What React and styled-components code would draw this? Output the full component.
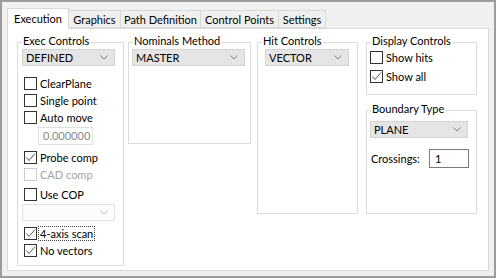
import styled, { createGlobalStyle } from 'styled-components'

const GlobalStyle = createGlobalStyle`
  body {
    margin: 0;
    font-family: Lato, "Noto Sans", sans-serif;
    font-size: 11px;
    color: #000;
  }
`

function Chevron({ $light }) {
  return (
    <svg width="8" height="5" viewBox="0 0 8 5">
      <path d="M0.5 0.5 L4 4 L7.5 0.5" fill="none" stroke={$light ? '#c4c4c4' : '#808080'} strokeWidth="1" />
    </svg>
  )
}

function Check({ label, checked, disabled, focused }) {
  return (
    <CheckRow $disabled={disabled}>
      <Box $disabled={disabled}>
        {checked && (
          <svg width="11" height="11" viewBox="0 0 11 11">
            <path d="M1.5 5.5 L4 8.5 L10 1.5" fill="none" stroke="#444" strokeWidth="0.9" />
          </svg>
        )}
      </Box>
      <CheckLabel $focused={focused}>{label}</CheckLabel>
    </CheckRow>
  )
}

function Combo({ value, w, disabled, mt, ml }) {
  return (
    <ComboBox $w={w} $disabled={disabled} $mt={mt} $ml={ml}>
      <span>{value}</span>
      <Chevron $light={disabled} />
    </ComboBox>
  )
}

const tabs = [
  { name: 'Execution', w: 62, active: true },
  { name: 'Graphics', w: 53 },
  { name: 'Path Definition', w: 81 },
  { name: 'Control Points', w: 79 },
  { name: 'Settings', w: 48 },
]

function App() {
  return (
    <>
      <GlobalStyle />
      <Window>
        <TabStrip>
          {tabs.map((t) => (
            <Tab key={t.name} $w={t.w} $active={t.active}>
              {t.name}
            </Tab>
          ))}
        </TabStrip>
        <Panel>
          <GroupBox $w={107} $h={224} $pl={4}>
            <Title>Exec Controls</Title>
            <Combo value="DEFINED" w={93} mt={6} />
            <Stack $ml={2} $mt={9}>
              <Check label="ClearPlane" />
              <Check label="Single point" />
              <Check label="Auto move" />
            </Stack>
            <NumInput $ml={16}>0.000000</NumInput>
            <Stack $ml={2} $mt={4}>
              <Check label="Probe comp" checked />
              <Check label="CAD comp" disabled />
            </Stack>
            <Stack $ml={2} $mt={3}>
              <Check label="Use COP" />
            </Stack>
            <Combo value="" w={93} disabled mt={1} />
            <Stack $ml={2} $mt={4}>
              <Check label="4-axis scan" checked focused />
              <Check label="No vectors" checked />
            </Stack>
          </GroupBox>

          <GroupBox $w={123} $h={102} $pl={3} $ml={4}>
            <Title>Nominals Method</Title>
            <Combo value="MASTER" w={113} mt={6} />
          </GroupBox>

          <GroupBox $w={101} $h={172} $pl={7} $ml={6}>
            <Title>Hit Controls</Title>
            <Combo value="VECTOR" w={84} mt={6} />
          </GroupBox>

          <Column>
            <GroupBox $w={111} $h={53} $pl={3}>
              <Title>Display Controls</Title>
              <Stack $mt={6} $gap={2}>
                <Check label="Show hits" />
                <Check label="Show all" checked />
              </Stack>
            </GroupBox>
            <GroupBox $w={111} $h={104} $pl={3}>
              <Title>Boundary Type</Title>
              <Combo value="PLANE" w={98} mt={10} />
              <FieldRow>
                <span>Crossings:</span>
                <TextInput>1</TextInput>
              </FieldRow>
            </GroupBox>
          </Column>
        </Panel>
      </Window>
    </>
  )
}

const Window = styled.div`
  width: 496px;
  height: 278px;
  box-sizing: border-box;
  border: 2px solid #9c9c9c;
  background: #f0f0f0;
  padding: 6px 5px 5px 5px;
  display: flex;
  flex-direction: column;
`

const TabStrip = styled.div`
  display: flex;
  align-items: flex-end;
  height: 21px;
  margin-bottom: -1px;
  position: relative;
  z-index: 1;
`

const Tab = styled.div`
  box-sizing: border-box;
  width: ${({ $w }) => $w}px;
  height: ${({ $active }) => ($active ? '21px' : '18px')};
  margin-bottom: ${({ $active }) => ($active ? '0' : '1px')};
  margin-left: -1px;
  &:first-child { margin-left: 0; }
  display: flex;
  align-items: center;
  justify-content: center;
  padding-bottom: ${({ $active }) => ($active ? '2px' : '0')};
  border: 1px solid #d9d9d9;
  border-bottom: ${({ $active }) => ($active ? 'none' : '1px solid #d9d9d9')};
  background: ${({ $active }) => ($active ? '#ffffff' : '#f0f0f0')};
  white-space: nowrap;
`

const Panel = styled.div`
  flex: 1;
  background: #ffffff;
  border: 1px solid #d9d9d9;
  padding: 13px 0 0 9px;
  display: flex;
  align-items: flex-start;
`

const Column = styled.div`
  display: flex;
  flex-direction: column;
  gap: 15px;
  margin-left: 8px;
`

const GroupBox = styled.div`
  position: relative;
  box-sizing: border-box;
  width: ${({ $w }) => $w}px;
  height: ${({ $h }) => $h}px;
  margin-left: ${({ $ml }) => $ml || 0}px;
  border: 1px solid #dcdcdc;
  padding-left: ${({ $pl }) => $pl}px;
  display: flex;
  flex-direction: column;
  align-items: flex-start;
`

const Title = styled.div`
  position: absolute;
  top: -9px;
  left: 4px;
  padding: 0 1px;
  background: #ffffff;
  line-height: 14px;
  white-space: nowrap;
`

const ComboBox = styled.div`
  box-sizing: border-box;
  width: ${({ $w }) => $w}px;
  height: 17px;
  margin-top: ${({ $mt }) => $mt || 0}px;
  margin-left: ${({ $ml }) => $ml || 0}px;
  display: flex;
  align-items: center;
  justify-content: space-between;
  padding: 0 6px 0 3px;
  background: ${({ $disabled }) => ($disabled ? '#fcfcfc' : '#e5e5e5')};
  border: 1px solid ${({ $disabled }) => ($disabled ? '#e3e3e3' : '#d4d4d4')};
  line-height: 15px;
`

const Stack = styled.div`
  display: flex;
  flex-direction: column;
  gap: ${({ $gap }) => $gap || 0}px;
  margin-left: ${({ $ml }) => $ml || 0}px;
  margin-top: ${({ $mt }) => $mt || 0}px;
`

const CheckRow = styled.div`
  display: flex;
  align-items: center;
  height: 17px;
  gap: 2px;
  color: ${({ $disabled }) => ($disabled ? '#a3a3a3' : '#000')};
  white-space: nowrap;
`

const Box = styled.div`
  box-sizing: border-box;
  width: 13px;
  height: 13px;
  border: 1px solid ${({ $disabled }) => ($disabled ? '#cccccc' : '#333333')};
  background: #ffffff;
  display: flex;
  align-items: center;
  justify-content: center;
`

const CheckLabel = styled.span`
  line-height: 13px;
  padding: 0 1px;
  outline: ${({ $focused }) => ($focused ? '1px dotted #444' : 'none')};
`

const NumInput = styled.div`
  box-sizing: border-box;
  width: 55px;
  height: 18px;
  margin-left: ${({ $ml }) => $ml}px;
  margin-top: 1px;
  border: 1px solid #e0e0e0;
  color: #8a8a8a;
  padding-left: 4px;
  line-height: 16px;
`

const FieldRow = styled.div`
  display: flex;
  align-items: center;
  justify-content: space-between;
  width: 99px;
  margin-top: 11px;
  padding-left: 1px;
  box-sizing: border-box;
`

const TextInput = styled.div`
  box-sizing: border-box;
  width: 40px;
  height: 19px;
  border: 1px solid #7a7a7a;
  padding-left: 5px;
  line-height: 17px;
`

export default App
